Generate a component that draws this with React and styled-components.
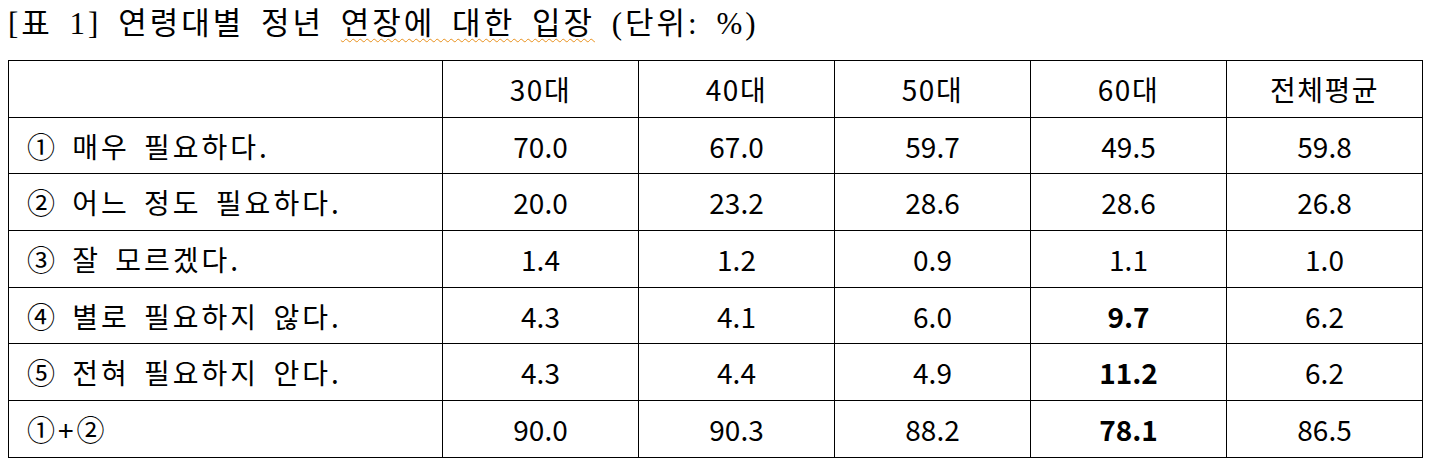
import React from 'react';
import styled, { createGlobalStyle } from 'styled-components';

const GlobalStyle = createGlobalStyle`
  body {
    margin: 0;
    background: #fff;
    color: #000;
  }
`;

const Page = styled.div`
  padding: 0 8px;
  width: 1414px;
`;

const Title = styled.div`
  height: 60px;
  box-sizing: border-box;
  padding-top: 9px;
  font-family: "Liberation Serif", "Noto Sans CJK KR", serif;
  font-size: 31px;
  line-height: 30px;
  letter-spacing: 3px;
  word-spacing: 6px;
  white-space: nowrap;
`;

const Squiggle = styled.span`
  text-decoration: underline wavy #e8901c;
  text-decoration-thickness: 1px;
  text-underline-offset: 4px;
`;

const Table = styled.table`
  border-collapse: collapse;
  table-layout: fixed;
  width: 1414px;
  font-family: "Noto Sans CJK KR", "Noto Sans", sans-serif;
  font-size: 28px;
  color: #000;
`;

const LabelCol = styled.col`
  width: 434px;
`;

const DataCol = styled.col`
  width: 196px;
`;

const Cell = styled.td`
  border: 1px solid #000;
  height: 55.7px;
  padding: 0 0 0 ${(p) => (p.$label ? '18px' : '0')};
  text-align: ${(p) => (p.$label ? 'left' : 'center')};
  font-weight: ${(p) => (p.$bold ? 700 : 400)};
  letter-spacing: ${(p) => (p.$label ? '3px' : p.$head ? '1.5px' : '0')};
  word-spacing: ${(p) => (p.$label ? '5px' : '0')};
  white-space: nowrap;
  line-height: 1;
`;

const columns = ['30대', '40대', '50대', '60대', '전체평균'];

const rows = [
  { label: '① 매우 필요하다.', values: ['70.0', '67.0', '59.7', '49.5', '59.8'] },
  { label: '② 어느 정도 필요하다.', values: ['20.0', '23.2', '28.6', '28.6', '26.8'] },
  { label: '③ 잘 모르겠다.', values: ['1.4', '1.2', '0.9', '1.1', '1.0'] },
  { label: '④ 별로 필요하지 않다.', values: ['4.3', '4.1', '6.0', '9.7', '6.2'], bold: 3 },
  { label: '⑤ 전혀 필요하지 안다.', values: ['4.3', '4.4', '4.9', '11.2', '6.2'], bold: 3 },
  { label: '①+②', values: ['90.0', '90.3', '88.2', '78.1', '86.5'], bold: 3 },
];

function App() {
  return (
    <Page>
      <GlobalStyle />
      <Title>
        [표 1] 연령대별 정년 <Squiggle>연장에 대한 입장</Squiggle> (단위: %)
      </Title>
      <Table>
        <colgroup>
          <LabelCol />
          {columns.map((c) => (
            <DataCol key={c} />
          ))}
        </colgroup>
        <tbody>
          <tr>
            <Cell $label />
            {columns.map((c) => (
              <Cell key={c} $head>{c}</Cell>
            ))}
          </tr>
          {rows.map((row) => (
            <tr key={row.label}>
              <Cell $label>{row.label}</Cell>
              {row.values.map((v, i) => (
                <Cell key={i} $bold={row.bold === i}>{v}</Cell>
              ))}
            </tr>
          ))}
        </tbody>
      </Table>
    </Page>
  );
}

export default App;
